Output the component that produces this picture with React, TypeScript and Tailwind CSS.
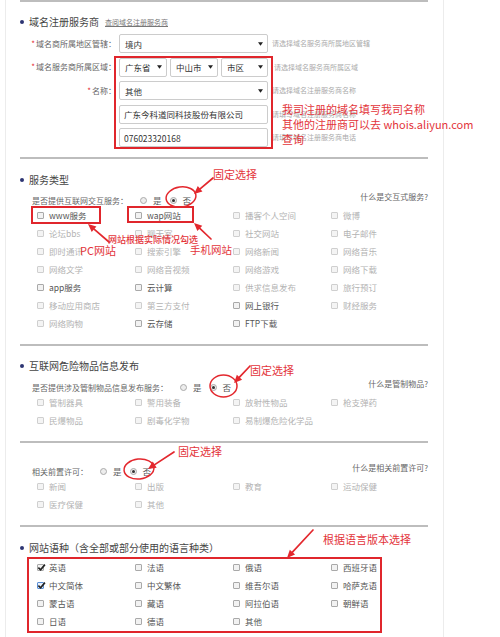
import React from "react";

/* ── small pieces ─────────────────────────────────────────────── */
function Divider() {
  return <div className="h-[2px] bg-[#bdbdbd]" />;
}

function Title({ children, extra }: { children: React.ReactNode; extra?: React.ReactNode }) {
  return (
    <div className="flex items-center h-[20px]">
      <span className="w-[4px] h-[4px] rounded-full bg-[#2d3573] flex-shrink-0" />
      <span className="ml-[5px] text-[10px] text-[#444] leading-none">{children}</span>
      {extra}
    </div>
  );
}

function Box({ checked, blue, disabled }: { checked?: boolean; blue?: boolean; disabled?: boolean }) {
  return (
    <span
      className={
        "relative w-[7px] h-[7px] rounded-[1px] border flex-shrink-0 " +
        (blue ? "border-[#5b8fd6] bg-[#e8f0fb]" : disabled ? "border-[#cfcfcf] bg-[#f4f4f4]" : "border-[#a9a9a9] bg-[#f2f2f2]")
      }
    >
      {checked && (
        <svg viewBox="0 0 10 10" className="absolute -left-[1px] -top-[2px] w-[9px] h-[9px]">
          <path d="M1.5 5.2 L4 7.6 L8.8 1.8" fill="none" stroke="#222" strokeWidth="1.8" />
        </svg>
      )}
    </span>
  );
}

type Item = { t: string; on?: boolean; checked?: boolean; blue?: boolean };

function CheckGrid({ items }: { items: Item[] }) {
  return (
    <div className="grid grid-cols-[98px_98px_98px_98px] pl-[17px]">
      {items.map((it, i) => (
        <div key={i} className="h-[18px] flex items-center gap-[5px]">
          <Box checked={it.checked} blue={it.blue} disabled={!it.on} />
          <span className={"text-[8.5px] leading-none whitespace-nowrap " + (it.on ? "text-[#555]" : "text-[#b3b3b3]")}>{it.t}</span>
        </div>
      ))}
    </div>
  );
}

function Radio({ on }: { on?: boolean }) {
  return (
    <span className="w-[7px] h-[7px] rounded-full border border-[#aaa] bg-[#ededed] flex items-center justify-center flex-shrink-0">
      {on && <span className="w-[3px] h-[3px] rounded-full bg-[#333]" />}
    </span>
  );
}

function RadioRow({ label, link, lift }: { label: string; link: string; lift?: boolean }) {
  return (
    <div className="h-[12px] flex items-center pl-[12px]">
      <span className="text-[8px] text-[#666] leading-none whitespace-nowrap">{label}</span>
      <span className="ml-[12px] flex items-center gap-[6px]">
        <Radio />
        <span className="text-[8.5px] text-[#666] leading-none">是</span>
      </span>
      <span className="ml-[8px] flex items-center gap-[6px]">
        <Radio on />
        <span className="text-[8.5px] text-[#555] leading-none">否</span>
      </span>
      <span className={"ml-auto text-[8px] text-[#666] leading-none " + (lift ? "mb-[8px]" : "mb-[7px]")}>{link}</span>
    </div>
  );
}

function Arrow({ x1, y1, x2, y2 }: { x1: number; y1: number; x2: number; y2: number }) {
  const a = Math.atan2(y2 - y1, x2 - x1);
  const L = 8, W = 3.6;
  const bx = x2 - L * Math.cos(a), by = y2 - L * Math.sin(a);
  const p1 = `${bx + W * Math.sin(a)},${by - W * Math.cos(a)}`;
  const p2 = `${bx - W * Math.sin(a)},${by + W * Math.cos(a)}`;
  return (
    <g>
      <line x1={x1} y1={y1} x2={bx} y2={by} stroke="#e3282e" strokeWidth="1.7" strokeLinecap="round" />
      <polygon points={`${x2},${y2} ${p1} ${p2}`} fill="#e3282e" />
    </g>
  );
}

const Arrow1 = Arrow;

/* ── section 1 fields ─────────────────────────────────────────── */
function Select({ text, w }: { text: string; w: string }) {
  return (
    <div className={"h-[19px] border border-[#ccc] rounded-[2px] bg-white flex items-center justify-between pl-[5px] pr-[4px] " + w}>
      <span className="text-[8.5px] text-[#333] leading-none whitespace-nowrap">{text}</span>
      <svg viewBox="0 0 6 4" className="w-[5px] h-[4px]"><path d="M0 0 H6 L3 4 Z" fill="#222" /></svg>
    </div>
  );
}

function Input({ text }: { text: string }) {
  return (
    <div className="h-[19px] w-[149px] border border-[#ccc] rounded-[2px] bg-white flex items-center pl-[4px]">
      <span className="text-[8.5px] text-[#333] leading-none whitespace-nowrap">{text}</span>
    </div>
  );
}

function FormRow({ label, star, children, hint, hintGap }: { label?: string; star?: boolean; children: React.ReactNode; hint: string; hintGap?: string }) {
  return (
    <div className="h-[23.5px] flex items-center">
      <div className="w-[96px] text-right text-[8px] text-[#666] leading-none whitespace-nowrap">
        {star && <span className="text-[#e3282e] mr-[1px]">*</span>}
        {label}
      </div>
      <div className="ml-[3px] flex items-center">{children}</div>
      <span className={"text-[7px] text-[#aaa] leading-none whitespace-nowrap " + (hintGap ?? "ml-[4px]")}>{hint}</span>
    </div>
  );
}

/* ── data ─────────────────────────────────────────────────────── */
const service: Item[] = [
  { t: "www服务", on: true }, { t: "wap网站", on: true }, { t: "播客个人空间" }, { t: "微博" },
  { t: "论坛bbs" }, { t: "聊天室" }, { t: "社交网站" }, { t: "电子邮件" },
  { t: "即时通讯" }, { t: "搜索引擎" }, { t: "网络新闻" }, { t: "网络音乐" },
  { t: "网络文学" }, { t: "网络音视频" }, { t: "网络游戏" }, { t: "网络下载" },
  { t: "app服务", on: true }, { t: "云计算", on: true }, { t: "供求信息发布" }, { t: "旅行预订" },
  { t: "移动应用商店" }, { t: "第三方支付" }, { t: "网上银行", on: true }, { t: "财经服务" },
  { t: "网络购物" }, { t: "云存储", on: true }, { t: "FTP下载", on: true },
];

const danger: Item[] = [
  { t: "管制器具" }, { t: "警用装备" }, { t: "放射性物品" }, { t: "枪支弹药" },
  { t: "民爆物品" }, { t: "剧毒化学物" }, { t: "易制爆危险化学品" },
];

const permit: Item[] = [
  { t: "新闻" }, { t: "出版" }, { t: "教育" }, { t: "运动保健" },
  { t: "医疗保健" }, { t: "其他" },
];

const langs: Item[] = [
  { t: "英语", on: true, checked: true }, { t: "法语", on: true }, { t: "俄语", on: true }, { t: "西班牙语", on: true },
  { t: "中文简体", on: true, checked: true, blue: true }, { t: "中文繁体", on: true }, { t: "维吾尔语", on: true }, { t: "哈萨克语", on: true },
  { t: "蒙古语", on: true }, { t: "藏语", on: true }, { t: "阿拉伯语", on: true }, { t: "朝鲜语", on: true },
  { t: "日语", on: true }, { t: "德语", on: true }, { t: "其他", on: true },
];

/* ── page ─────────────────────────────────────────────────────── */
export default function App() {
  const red = "text-[#e3343a]";
  return (
    <div className="relative w-[500px] h-[637px] overflow-hidden bg-white font-['Noto_Sans_CJK_SC','Noto_Sans',sans-serif]">
      <div className="ml-[5px] w-[439px] h-full border-x border-[#ececec] pl-[14px] pr-[15px]">
        <Divider />

        {/* 域名注册服务商 */}
        <div className="mt-[10px]">
          <Title extra={<span className="ml-[6px] text-[7px] text-[#777] underline leading-none">查阅域名注册服务商</span>}>
            域名注册服务商
          </Title>
        </div>
        <FormRow star label="域名商所属地区管辖：" hint="请选择域名服务商所属地区管辖">
          <Select text="境内" w="w-[149px]" />
        </FormRow>
        <FormRow star label="域名服务商所属区域：" hint="请选择域名服务商所属区域" hintGap="ml-[6px]">
          <div className="flex gap-[3px]">
            <Select text="广东省" w="w-[48px]" />
            <Select text="中山市" w="w-[48px]" />
            <Select text="市区" w="w-[47px]" />
          </div>
        </FormRow>
        <FormRow star label="名称：" hint="请选择域名注册服务商名称">
          <Select text="其他" w="w-[149px]" />
        </FormRow>
        <FormRow hint="请填写域名注册服务商名称">
          <Input text="广东今科道同科技股份有限公司" />
        </FormRow>
        <FormRow hint="请填写域名注册服务商电话">
          <Input text="076023320168" />
        </FormRow>
        <div className="mt-[7px]"><Divider /></div>

        {/* 服务类型 */}
        <div className="mt-[11px]"><Title>服务类型</Title></div>
        <div className="mt-[5px]"><RadioRow label="是否提供互联网交互服务：" link="什么是交互式服务?" /></div>
        <CheckGrid items={service} />
        <div className="mt-[11px]"><Divider /></div>

        {/* 互联网危险物品信息发布 */}
        <div className="mt-[10px]"><Title>互联网危险物品信息发布</Title></div>
        <div className="mt-[6px]"><RadioRow label="是否提供涉及管制物品信息发布服务：" link="什么是管制物品?" lift /></div>
        <CheckGrid items={danger} />
        <div className="mt-[11px]"><Divider /></div>

        {/* 相关前置许可 */}
        <div className="mt-[23px]"><RadioRow label="相关前置许可：" link="什么是相关前置许可?" lift /></div>
        <CheckGrid items={permit} />
        <div className="mt-[11px]"><Divider /></div>

        {/* 网站语种 */}
        <div className="mt-[11px]"><Title>网站语种（含全部或部分使用的语言种类）</Title></div>
        <div className="mt-[1px]"><CheckGrid items={langs} /></div>
      </div>

      {/* ── red annotations ── */}
      <div className="absolute left-[114px] top-[56px] w-[159px] h-[93px] border-2 border-[#e0262c]" />
      <div className="absolute left-[31px] top-[206px] w-[70px] h-[18px] border-2 border-[#e0262c]" />
      <div className="absolute left-[127px] top-[206px] w-[67px] h-[17px] border-2 border-[#e0262c]" />
      <div className="absolute left-[27px] top-[557px] w-[355px] h-[76px] border-2 border-[#e0262c]" />

      <svg className="absolute left-0 top-0 w-[500px] h-[637px]" viewBox="0 0 500 637">
        <ellipse cx="181" cy="197" rx="15" ry="10" fill="none" stroke="#e3282e" strokeWidth="1.5" transform="rotate(-8 181 197)" />
        <ellipse cx="223.5" cy="386" rx="13.5" ry="11" fill="none" stroke="#e3282e" strokeWidth="1.5" />
        <ellipse cx="139" cy="469" rx="15" ry="10" fill="none" stroke="#e3282e" strokeWidth="1.5" transform="rotate(-6 139 469)" />
        <Arrow x1={213} y1={178} x2={194} y2={194} />
        <Arrow1 x1={109} y1={242} x2={88} y2={224} />
        <Arrow x1={211} y1={239} x2={194} y2={223} />
        <Arrow x1={250} y1={366} x2={234} y2={383} />
        <Arrow x1={174} y1={452} x2={148} y2={469} />
        <Arrow x1={313} y1={530} x2={287} y2={558} />
      </svg>

      <div className={"absolute left-[282px] top-[104px] text-[11px] leading-none whitespace-nowrap " + red}>我司注册的域名填写我司名称</div>
      <div className={"absolute left-[282px] top-[119px] text-[11px] leading-none whitespace-nowrap " + red}>其他的注册商可以去 whois.aliyun.com</div>
      <div className={"absolute left-[282px] top-[134px] text-[11px] leading-none whitespace-nowrap " + red}>查询</div>

      <div className={"absolute left-[213px] top-[169px] text-[11px] leading-none " + red}>固定选择</div>
      <div className={"absolute left-[108px] top-[235px] text-[9px] font-medium leading-none whitespace-nowrap " + red}>网站根据实际情况勾选</div>
      <div className={"absolute left-[80px] top-[245px] text-[11px] leading-none whitespace-nowrap " + red}>PC网站</div>
      <div className={"absolute left-[190px] top-[245px] text-[10.5px] leading-none whitespace-nowrap " + red}>手机网站</div>
      <div className={"absolute left-[250px] top-[365px] text-[11px] leading-none " + red}>固定选择</div>
      <div className={"absolute left-[178px] top-[446px] text-[11px] leading-none " + red}>固定选择</div>
      <div className={"absolute left-[323px] top-[534px] text-[11px] leading-none whitespace-nowrap " + red}>根据语言版本选择</div>
    </div>
  );
}
